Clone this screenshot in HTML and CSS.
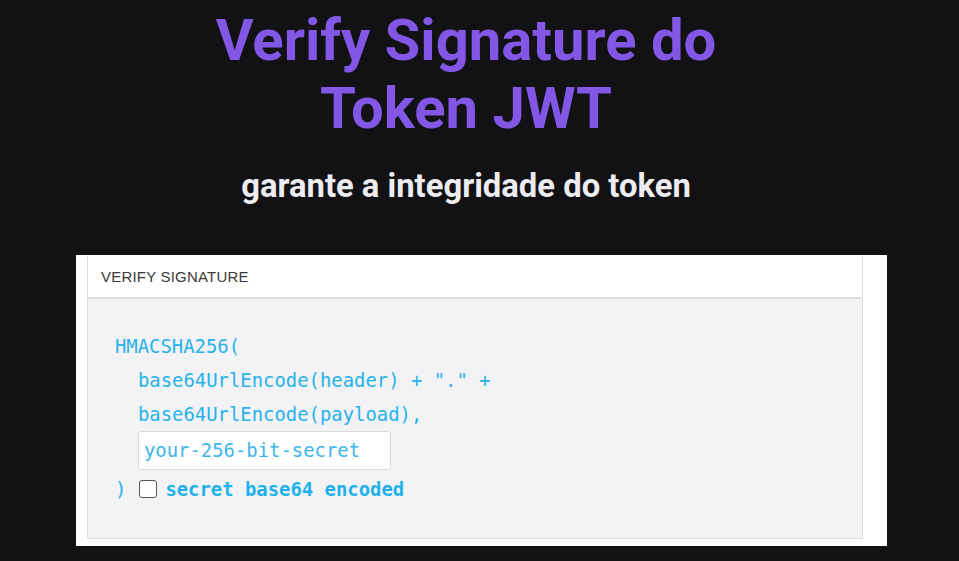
FILE: index.html
```html
<!DOCTYPE html>
<html lang="pt">
<head>
<meta charset="utf-8">
<link rel="stylesheet" href="styles.css">
</head>
<body>
<header class="hero">
  <h1 class="title">Verify Signature do<br>Token JWT</h1>
  <p class="subtitle">garante a integridade do token</p>
</header>
<section class="shot">
  <div class="box">
    <div class="box-head">VERIFY SIGNATURE</div>
    <div class="box-body">
      <div class="line">HMACSHA256(</div>
      <div class="line indent">base64UrlEncode(header) + "." +</div>
      <div class="line indent">base64UrlEncode(payload),</div>
      <div class="line indent"><span class="secret">your-256-bit-secret</span></div>
      <div class="line last"><span class="paren">)</span><span class="check"></span><span class="enc">secret base64 encoded</span></div>
    </div>
  </div>
</section>
</body>
</html>
```
FILE: styles.css
```css
html, body {
  margin: 0;
  padding: 0;
  background: #121214;
  height: 100%;
}
body {
  font-family: Roboto, "Noto Sans", sans-serif;
}
.hero {
  display: flex;
  flex-direction: column;
  align-items: center;
  padding-right: 27px;
  padding-top: 6px;
}
.title {
  margin: 0;
  color: #8257e5;
  font-weight: 700;
  font-size: 58px;
  line-height: 68px;
  text-align: center;
}
.subtitle {
  margin: 26px 0 0;
  color: #ececf1;
  font-weight: 700;
  font-size: 32.8px;
  line-height: 36px;
}
.shot {
  margin: 51px 0 0 76px;
  width: 811px;
  height: 291px;
  background: #fff;
  box-sizing: border-box;
  padding: 1px 24px 7px 11px;
}
.box {
  height: 283px;
  border: 1px solid #dcdcdc;
  border-top: none;
  box-sizing: border-box;
  display: flex;
  flex-direction: column;
}
.box-head {
  height: 43px;
  border-bottom: 2px solid #dedede;
  box-sizing: border-box;
  padding-left: 13px;
  display: flex;
  align-items: center;
  font-family: "Liberation Sans", Arial, sans-serif;
  font-size: 15px;
  color: #3a3a3a;
  letter-spacing: 0.2px;
}
.box-body {
  flex: 1;
  background: #f3f3f5;
  padding: 30px 0 0 27px;
  font-family: "DejaVu Sans Mono", monospace;
  font-size: 18.9px;
  color: #27b2eb;
}
.line {
  height: 34px;
  display: flex;
  align-items: center;
  white-space: pre;
}
.indent {
  padding-left: 23px;
}
.secret {
  display: inline-flex;
  align-items: center;
  width: 253px;
  height: 39px;
  box-sizing: border-box;
  border: 1px solid #dadada;
  border-radius: 3px;
  background: #fff;
  padding-left: 5px;
  color: #3db6ea;
  margin-top: 4px;
}
.last {
  margin-top: 7px;
  height: 34px;
}
.paren {
  margin-right: 13px;
}
.check {
  width: 16px;
  height: 16px;
  border: 1.5px solid #555;
  border-radius: 3px;
  background: #fff;
  margin-right: 8px;
}
.enc {
  font-weight: 700;
  color: #1fb1ec;
}
```
